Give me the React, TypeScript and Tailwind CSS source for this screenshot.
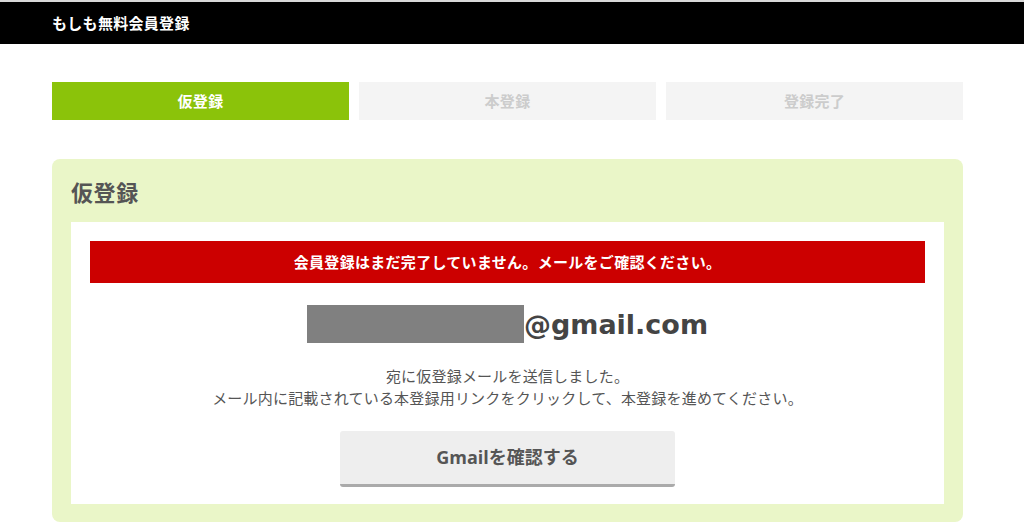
import React from "react";

const steps = [
  { label: "仮登録", active: true },
  { label: "本登録", active: false },
  { label: "登録完了", active: false },
];

const App = () => {
  return (
    <div className="w-[1024px] h-[526px] overflow-hidden bg-white font-['Open_Sans','Noto_Sans_CJK_JP',sans-serif]">
      {/* Header */}
      <div className="border-t-2 border-[#d8d8d8] h-[44px] bg-black flex items-center px-[52px]">
        <span className="text-white text-[15px] tracking-[0.3px] font-bold">もしも無料会員登録</span>
      </div>

      <div className="px-[52px] w-[1015px]">
        {/* Steps */}
        <div className="grid grid-cols-3 gap-[10px] mt-[38px]">
          {steps.map((s) => (
            <div
              key={s.label}
              className={
                s.active
                  ? "h-[38px] flex items-center justify-center bg-[#8bc30a] text-white text-[15px] tracking-[0.3px] font-bold"
                  : "h-[38px] flex items-center justify-center bg-[#f4f4f4] text-[#cccccc] text-[15px] tracking-[0.3px] font-bold"
              }
            >
              {s.label}
            </div>
          ))}
        </div>

        {/* Card */}
        <div className="mt-[39px] bg-[#eaf6c8] rounded-[8px] px-[19px] pb-[18px]">
          <h2 className="h-[63px] flex items-center pt-[4px] text-[22px] tracking-[0.6px] font-bold text-[#555555]">仮登録</h2>
          <div className="bg-white px-[19px] pt-[19px] pb-[17px] flex flex-col items-center">
            <div className="w-full h-[42px] bg-[#cc0000] flex items-center justify-center text-white text-[15px] tracking-[0.3px] font-bold">
              会員登録はまだ完了していません。メールをご確認ください。
            </div>

            <div className="mt-[22px] flex items-center">
              <div className="w-[217px] h-[38px] bg-[#808080]" />
              <span className="font-['DejaVu_Sans',sans-serif] text-[27px] font-bold text-[#444444] leading-none">@gmail.com</span>
            </div>

            <p className="mt-[22px] text-[15px] tracking-[0.2px] leading-[22px] text-[#555555] text-center">
              宛に仮登録メールを送信しました。
              <br />
              メール内に記載されている本登録用リンクをクリックして、本登録を進めてください。
            </p>

            <button className="mt-[22px] w-[335px] h-[56px] bg-[#eeeeee] rounded-[3px] border-b-[3px] border-[#aaaaaa] text-[18px] font-bold text-[#555555]">
              Gmailを確認する
            </button>
          </div>
        </div>
      </div>
    </div>
  );
};

export default App;
